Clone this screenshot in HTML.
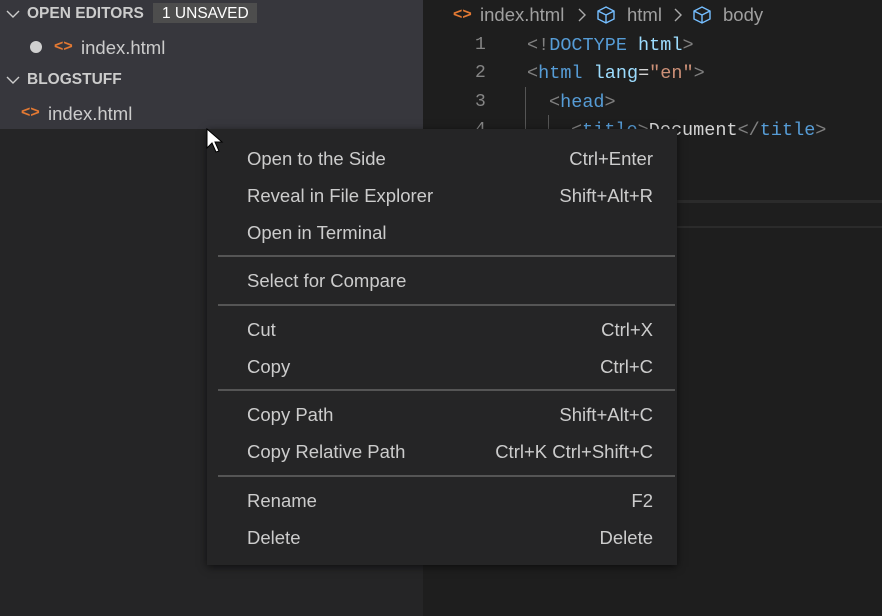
<!DOCTYPE html>
<html><head><meta charset="utf-8"><style>
*{margin:0;padding:0;box-sizing:border-box}
body{width:882px;height:616px;overflow:hidden;background:#1e1e1e;font-family:"Liberation Sans",sans-serif;position:relative;color:#ccc}
.abs{position:absolute;white-space:nowrap}
.side{left:0;top:0;width:423px;height:616px;background:#252526}
.sidetop{left:0;top:0;width:423px;height:129px;background:#37373d}
.hdr{font-weight:bold;font-size:15.5px;color:#ccc}
.badge{left:153px;top:3px;width:104px;height:20px;background:#4d4d4d;font-size:15.5px;color:#fff;padding-left:9px;line-height:21px}
.fn{font-size:18.5px;color:#ccc}
.ang{color:#e37933;font-size:16px;font-weight:bold}
.code{font-family:"Liberation Mono",monospace;font-size:18.5px;color:#d4d4d4}
.ln{color:#858585;font-family:"Liberation Mono",monospace;font-size:18px}
.tag{color:#569cd6}.pun{color:#808080}.att{color:#9cdcfe}.str{color:#ce9178}
.menu{left:207px;top:129px;width:470px;height:436px;background:#252526;box-shadow:0 2px 8px rgba(0,0,0,.6)}
.mi{font-size:18.5px;color:#ccc}
.sep{left:218px;width:457px;height:2px;background:#555}
</style></head><body>
<div class="abs side"></div>
<div class="abs sidetop"></div>
<svg class="abs" style="left:5px;top:8px" width="16" height="12"><path d="M2 3l6 6 6-6" stroke="#ccc" stroke-width="1.4" fill="none"/></svg>
<div class="abs hdr" style="left:27px;top:5px">OPEN EDITORS</div>
<div class="abs badge">1 UNSAVED</div>
<div class="abs" style="left:30px;top:41px;width:12px;height:12px;border-radius:50%;background:#d0d0d0"></div>
<div class="abs ang" style="left:54px;top:38px">&lt;&gt;</div>
<div class="abs fn" style="left:81px;top:37px">index.html</div>
<svg class="abs" style="left:5px;top:74px" width="16" height="12"><path d="M2 3l6 6 6-6" stroke="#ccc" stroke-width="1.4" fill="none"/></svg>
<div class="abs hdr" style="left:27px;top:71px">BLOGSTUFF</div>
<div class="abs ang" style="left:21px;top:104px">&lt;&gt;</div>
<div class="abs fn" style="left:48px;top:103px">index.html</div>

<div class="abs ang" style="left:453px;top:6px">&lt;&gt;</div>
<div class="abs fn" style="left:480px;top:4px;color:#a0a0a0">index.html</div>
<svg class="abs" style="left:577px;top:7px" width="10" height="16"><path d="M2 2l6 6-6 6" stroke="#aaa" stroke-width="1.4" fill="none"/></svg>
<svg class="abs" style="left:595px;top:5px" width="22" height="20"><path d="M11 2l8 4v8l-8 4-8-4V6z M3 6l8 4 8-4 M11 10v8" stroke="#75beff" stroke-width="1.4" fill="none"/></svg>
<div class="abs fn" style="left:627px;top:4px;color:#a0a0a0">html</div>
<svg class="abs" style="left:673px;top:7px" width="10" height="16"><path d="M2 2l6 6-6 6" stroke="#aaa" stroke-width="1.4" fill="none"/></svg>
<svg class="abs" style="left:691px;top:5px" width="22" height="20"><path d="M11 2l8 4v8l-8 4-8-4V6z M3 6l8 4 8-4 M11 10v8" stroke="#75beff" stroke-width="1.4" fill="none"/></svg>
<div class="abs fn" style="left:723px;top:4px;color:#a0a0a0">body</div>

<div class="abs ln" style="left:475px;top:35px">1</div>
<div class="abs ln" style="left:475px;top:63px">2</div>
<div class="abs ln" style="left:475px;top:92px">3</div>
<div class="abs ln" style="left:475px;top:120px">4</div>
<div class="abs code" style="left:527px;top:35px"><span class="pun">&lt;!</span><span class="tag">DOCTYPE</span> <span class="att">html</span><span class="pun">&gt;</span></div>
<div class="abs code" style="left:527px;top:63px"><span class="pun">&lt;</span><span class="tag">html</span> <span class="att">lang</span>=<span class="str">"en"</span><span class="pun">&gt;</span></div>
<div class="abs" style="left:525px;top:87px;width:1px;height:45px;background:#555"></div>
<div class="abs code" style="left:549px;top:92px"><span class="pun">&lt;</span><span class="tag">head</span><span class="pun">&gt;</span></div>
<div class="abs" style="left:548px;top:115px;width:1px;height:20px;background:#555"></div>
<div class="abs code" style="left:571px;top:120px"><span class="pun">&lt;</span><span class="tag">title</span><span class="pun">&gt;</span>Document<span class="pun">&lt;/</span><span class="tag">title</span><span class="pun">&gt;</span></div>
<div class="abs" style="left:677px;top:200px;width:205px;height:3px;background:#2b2b2b"></div>
<div class="abs" style="left:677px;top:226px;width:205px;height:2px;background:#2b2b2b"></div>

<div class="abs menu"></div>
<div class="abs mi" style="left:247px;top:148px">Open to the Side</div><div class="abs mi" style="right:229px;top:148px">Ctrl+Enter</div>
<div class="abs mi" style="left:247px;top:185px">Reveal in File Explorer</div><div class="abs mi" style="right:229px;top:185px">Shift+Alt+R</div>
<div class="abs mi" style="left:247px;top:222px">Open in Terminal</div>
<div class="abs sep" style="top:255px"></div>
<div class="abs mi" style="left:247px;top:270px">Select for Compare</div>
<div class="abs sep" style="top:304px"></div>
<div class="abs mi" style="left:247px;top:319px">Cut</div><div class="abs mi" style="right:229px;top:319px">Ctrl+X</div>
<div class="abs mi" style="left:247px;top:356px">Copy</div><div class="abs mi" style="right:229px;top:356px">Ctrl+C</div>
<div class="abs sep" style="top:389px"></div>
<div class="abs mi" style="left:247px;top:404px">Copy Path</div><div class="abs mi" style="right:229px;top:404px">Shift+Alt+C</div>
<div class="abs mi" style="left:247px;top:441px">Copy Relative Path</div><div class="abs mi" style="right:229px;top:441px">Ctrl+K Ctrl+Shift+C</div>
<div class="abs sep" style="top:475px"></div>
<div class="abs mi" style="left:247px;top:490px">Rename</div><div class="abs mi" style="right:229px;top:490px">F2</div>
<div class="abs mi" style="left:247px;top:527px">Delete</div><div class="abs mi" style="right:229px;top:527px">Delete</div>

<svg class="abs" style="left:206px;top:128px" width="18" height="26"><path d="M1 1v19l5-5 4 9 3-1-4-9h7z" fill="#fff" stroke="#000" stroke-width="1"/></svg>
</body></html>
